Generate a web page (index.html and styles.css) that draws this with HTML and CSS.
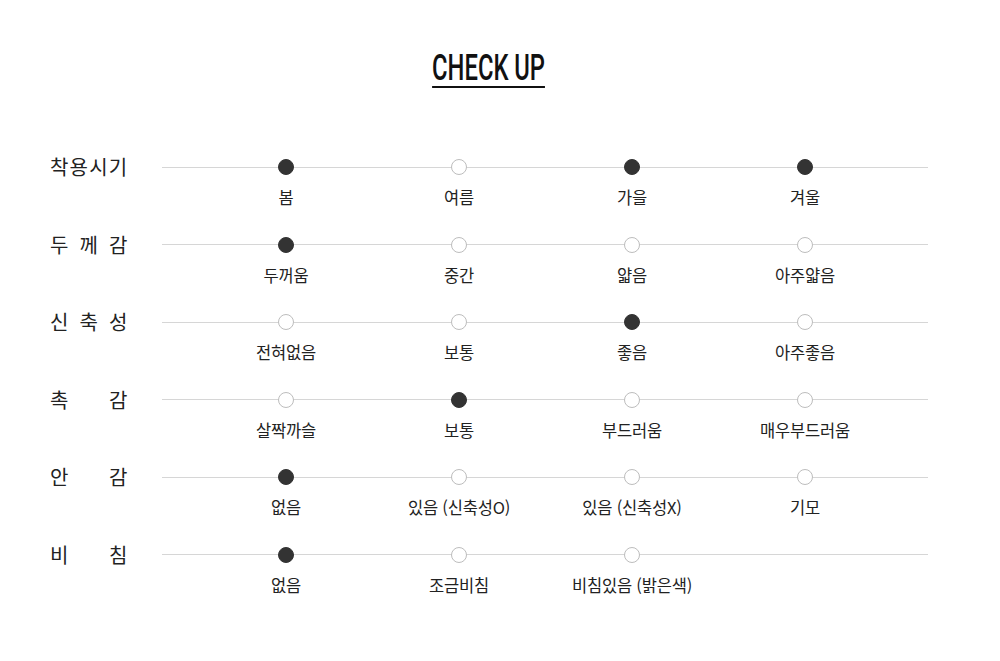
FILE: index.html
```html
<!DOCTYPE html>
<html lang="ko">
<head>
<meta charset="utf-8">
<link rel="stylesheet" href="styles.css">
</head>
<body>
<div class="page">
  <div class="head"><h1 class="title">CHECK UP</h1></div>
  <div class="rows">
    <div class="row">
      <div class="label">착용시기</div>
      <div class="track">
        <div class="item"><span class="dot on"></span><span class="txt">봄</span></div>
        <div class="item"><span class="dot"></span><span class="txt">여름</span></div>
        <div class="item"><span class="dot on"></span><span class="txt">가을</span></div>
        <div class="item"><span class="dot on"></span><span class="txt">겨울</span></div>
      </div>
    </div>
    <div class="row">
      <div class="label">두 께 감</div>
      <div class="track">
        <div class="item"><span class="dot on"></span><span class="txt">두꺼움</span></div>
        <div class="item"><span class="dot"></span><span class="txt">중간</span></div>
        <div class="item"><span class="dot"></span><span class="txt">얇음</span></div>
        <div class="item"><span class="dot"></span><span class="txt">아주얇음</span></div>
      </div>
    </div>
    <div class="row">
      <div class="label">신 축 성</div>
      <div class="track">
        <div class="item"><span class="dot"></span><span class="txt">전혀없음</span></div>
        <div class="item"><span class="dot"></span><span class="txt">보통</span></div>
        <div class="item"><span class="dot on"></span><span class="txt">좋음</span></div>
        <div class="item"><span class="dot"></span><span class="txt">아주좋음</span></div>
      </div>
    </div>
    <div class="row">
      <div class="label">촉 감</div>
      <div class="track">
        <div class="item"><span class="dot"></span><span class="txt">살짝까슬</span></div>
        <div class="item"><span class="dot on"></span><span class="txt">보통</span></div>
        <div class="item"><span class="dot"></span><span class="txt">부드러움</span></div>
        <div class="item"><span class="dot"></span><span class="txt">매우부드러움</span></div>
      </div>
    </div>
    <div class="row">
      <div class="label">안 감</div>
      <div class="track">
        <div class="item"><span class="dot on"></span><span class="txt">없음</span></div>
        <div class="item"><span class="dot"></span><span class="txt">있음 (신축성O)</span></div>
        <div class="item"><span class="dot"></span><span class="txt">있음 (신축성X)</span></div>
        <div class="item"><span class="dot"></span><span class="txt">기모</span></div>
      </div>
    </div>
    <div class="row">
      <div class="label">비 침</div>
      <div class="track">
        <div class="item"><span class="dot on"></span><span class="txt">없음</span></div>
        <div class="item"><span class="dot"></span><span class="txt">조금비침</span></div>
        <div class="item"><span class="dot"></span><span class="txt">비침있음 (밝은색)</span></div>
        <div class="item empty"></div>
      </div>
    </div>
  </div>
</div>
</body>
</html>
```
FILE: styles.css
```css
* { box-sizing: border-box; }
html, body { margin: 0; padding: 0; background: #fff; }
body {
  font-family: "Noto Sans CJK KR", "Noto Sans", sans-serif;
  color: #222;
}
.page { width: 1000px; height: 661px; padding-top: 50px; }
.head { display: flex; justify-content: center; padding-right: 22px; }
.title {
  margin: 0;
  font-family: "Roboto", "Liberation Sans", sans-serif;
  font-weight: 500;
  font-size: 36px;
  line-height: 36px;
  letter-spacing: 0;
  color: #111;
  padding-bottom: 0;
  border-bottom: 2px solid #111;
  transform: scaleX(0.66);
}
.rows { margin-top: 71px; padding-left: 50px; }
.row { display: flex; height: 77.6px; }
.label {
  width: 78.5px;
  margin-right: 33.5px;
  font-size: 20px;
  line-height: 16px;
  height: 16px;
  white-space: nowrap;
  text-align: justify;
  text-align-last: justify;
  letter-spacing: 1.2px;
  color: #222;
}
.track {
  width: 766px;
  padding: 0 37px 0 37.5px;
  display: grid;
  grid-template-columns: repeat(4, 173px);
  align-items: start;
  background: linear-gradient(#d6d6d6, #d6d6d6) no-repeat 0 7.5px / 100% 1px;
}
.item { display: flex; flex-direction: column; align-items: center; }
.dot {
  width: 16px; height: 16px;
  border-radius: 50%;
  background: #fff;
  border: 1px solid #bdbdbd;
}
.dot.on { background: #333; border-color: #333; }
.txt {
  margin-top: 12px;
  font-size: 16.5px;
  line-height: 20px;
  letter-spacing: -0.2px;
  color: #222;
  white-space: nowrap;
}
```
